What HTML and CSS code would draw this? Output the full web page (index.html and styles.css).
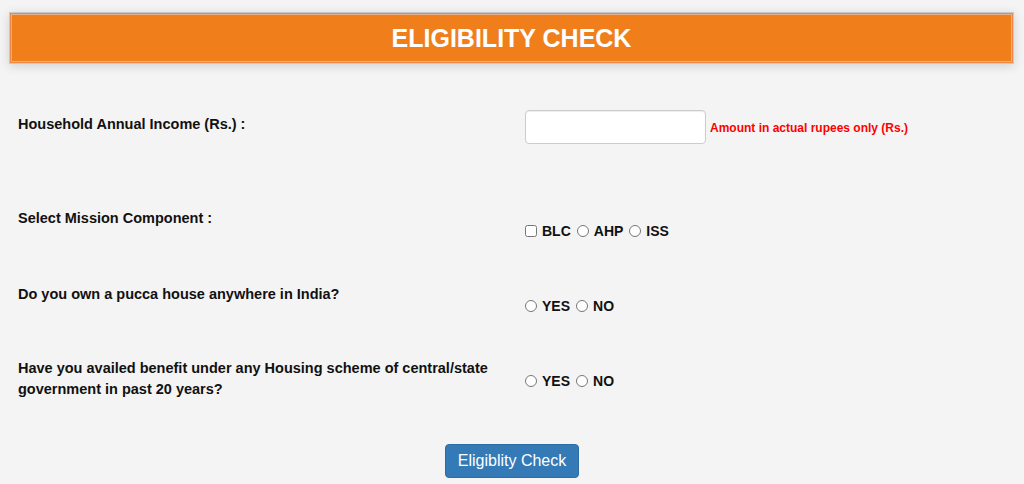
FILE: index.html
```html
<!DOCTYPE html>
<html>
<head>
<meta charset="utf-8">
<link rel="stylesheet" href="styles.css">
</head>
<body>
<div class="page">
  <div class="header">
    <h1 class="title">ELIGIBILITY CHECK</h1>
  </div>
  <form class="form">
    <div class="row row-income">
      <div class="label">Household Annual Income (Rs.) :</div>
      <div class="field">
        <input type="text" class="text-input"> <span class="hint">Amount in actual rupees only (Rs.)</span>
      </div>
    </div>
    <div class="row row-mission">
      <div class="label">Select Mission Component :</div>
      <div class="field opts">
        <label class="opt"><input type="checkbox"> BLC</label>
        <label class="opt"><input type="radio" name="m"> AHP</label>
        <label class="opt"><input type="radio" name="m"> ISS</label>
      </div>
    </div>
    <div class="row row-pucca">
      <div class="label">Do you own a pucca house anywhere in India?</div>
      <div class="field opts">
        <label class="opt"><input type="radio" name="p"> YES</label>
        <label class="opt"><input type="radio" name="p"> NO</label>
      </div>
    </div>
    <div class="row row-benefit">
      <div class="label">Have you availed benefit under any Housing scheme of central/state government in past 20 years?</div>
      <div class="field opts">
        <label class="opt"><input type="radio" name="b"> YES</label>
        <label class="opt"><input type="radio" name="b"> NO</label>
      </div>
    </div>
    <div class="actions">
      <button type="button" class="btn">Eligiblity Check</button>
    </div>
  </form>
</div>
</body>
</html>
```

FILE: styles.css
```css
html, body {
  margin: 0;
  padding: 0;
  background: #f4f4f4;
  font-family: "Liberation Sans", Arial, sans-serif;
  color: #111;
}
.page {
  padding-top: 12px;
}
.header {
  margin: 0 10px 0 9px;
  border: 1px solid #c9c9c9;
  background: #e98a4a;
  padding: 1px;
  box-shadow: 0 2px 10px rgba(0, 0, 0, 0.15);
}
.title {
  margin: 0;
  height: 46px;
  border: 1px solid #e3b190;
  background: #f07e1b;
  color: #fff;
  font-size: 25px;
  font-weight: bold;
  line-height: 46px;
  text-align: center;
}
.form {
  padding-left: 18px;
  padding-top: 46px;
}
.row {
  display: flex;
  align-items: flex-start;
}
.label {
  flex: 0 0 auto;
  width: 489px;
  padding-right: 18px;
  font-size: 14.5px;
  font-weight: bold;
  line-height: 21px;
}
.field {
  font-size: 14px;
  font-weight: bold;
}
.row-income .label {
  padding-top: 4px;
}
.row-income .field {
  display: flex;
  align-items: center;
}
.text-input {
  box-sizing: border-box;
  width: 181px;
  height: 34px;
  border: 1px solid #ccc;
  border-radius: 4px;
  background: #fff;
  box-shadow: inset 0 1px 1px rgba(0, 0, 0, 0.075);
  margin: 0 4px 0 0;
  padding: 6px 12px;
  font-size: 14px;
}
.hint {
  color: #ff0000;
  font-size: 12px;
  font-weight: bold;
  padding-top: 1px;
}
.row-mission {
  margin-top: 64px;
}
.row-pucca {
  margin-top: 43px;
}
.row-benefit {
  margin-top: 42px;
}
.row-mission .field {
  padding-top: 13px;
}
.row-pucca .field {
  padding-top: 12px;
}
.row-benefit .field {
  padding-top: 13px;
}
.opts {
  display: flex;
  align-items: center;
  gap: 6px;
  line-height: 20px;
}
.opt {
  display: flex;
  align-items: center;
  gap: 5px;
}
.opt input {
  margin: 0;
  width: 12px;
  height: 12px;
}
.actions {
  margin-top: 44px;
  margin-left: -18px;
  display: flex;
  justify-content: center;
}
.btn {
  height: 34px;
  padding: 6px 12px;
  border: 1px solid #2e6da4;
  border-radius: 4px;
  background: #337ab7;
  color: #fff;
  font-family: "Liberation Sans", Arial, sans-serif;
  font-size: 16px;
  line-height: 20px;
}
```
